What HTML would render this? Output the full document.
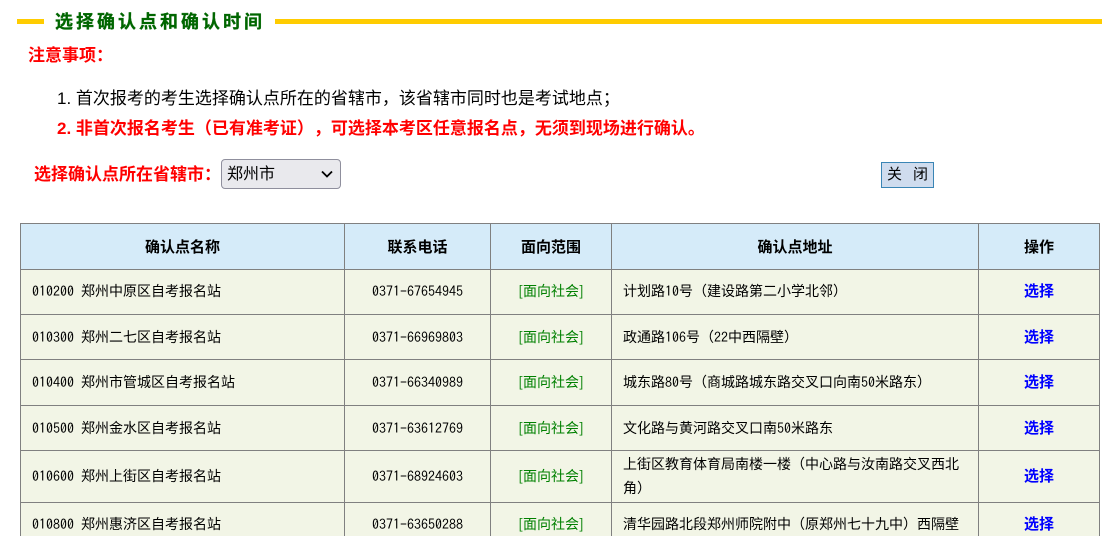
<!DOCTYPE html>
<html lang="zh">
<head>
<meta charset="utf-8">
<title>选择确认点和确认时间</title>
<style>
html,body{margin:0;padding:0;background:#fff;width:1111px;height:536px;overflow:hidden;}
body{position:relative;font-family:"Liberation Sans","WenQuanYi Zen Hei","Noto Sans CJK SC",sans-serif;color:#000;text-spacing-trim:space-all;}
.abs{position:absolute;white-space:nowrap;}
.bar{position:absolute;background:#ffcc00;height:5px;top:19px;}
.title{left:55px;top:9px;font-size:18px;line-height:26px;font-weight:bold;color:#006600;letter-spacing:3px;-webkit-text-stroke:.3px #006600;}
.red{color:#f00;font-weight:bold;}
.sel{position:absolute;left:221px;top:159px;width:120px;height:30px;box-sizing:border-box;border:1px solid #8f8f9d;border-radius:4px;background:#e9e9ed;font-size:16px;line-height:28px;padding:1px 0 0 5px;color:#000;}
.sel svg{position:absolute;right:6px;top:9px;}
.btn{position:absolute;left:881px;top:162px;width:53px;height:26px;box-sizing:border-box;border:1px solid #3a85b5;background:#cfdcee;font-size:15px;line-height:24px;text-align:center;color:#000;white-space:nowrap;}
.btn span{margin-left:11px;}
table{position:absolute;left:20px;top:223px;border-collapse:separate;border-spacing:0;table-layout:fixed;width:1080px;border-right:1px solid #808080;font-family:"WenQuanYi Zen Hei","Noto Sans CJK SC",sans-serif;font-size:14px;line-height:24px;}
th,td{border-left:1px solid #808080;border-top:1px solid #808080;padding:0 11px;box-sizing:border-box;text-align:center;font-size:14px;}
th{background:#d5ebf9;font-weight:bold;font-size:15px;}
td{background:#f2f5e6;}
td.l{text-align:left;}
td.g{color:#008000;}
td a{color:#00f;font-weight:bold;font-size:15px;text-decoration:none;}
i{font-style:normal;font-family:"IPAGothic",monospace;}
tr.u td{padding-bottom:2px;}
</style>
</head>
<body>
<div class="bar" style="left:17px;width:27px;"></div>
<div class="abs title">选择确认点和确认时间</div>
<div class="bar" style="left:275px;width:827px;"></div>
<div class="abs red" style="left:28px;top:44px;font-size:17px;line-height:24px;">注意事项：</div>
<div class="abs" style="left:57px;top:87px;font-size:17px;line-height:24px;">1. 首次报考的考生选择确认点所在的省辖市，该省辖市同时也是考试地点；</div>
<div class="abs red" style="left:57px;top:117px;font-size:17px;line-height:24px;">2. 非首次报名考生（已有准考证），可选择本考区任意报名点，无须到现场进行确认。</div>
<div class="abs red" style="left:34px;top:163px;font-size:17px;line-height:24px;">选择确认点所在省辖市：</div>
<div class="sel">郑州市<svg width="14" height="10" viewBox="0 0 14 10"><path d="M2 2.5 L7 7.5 L12 2.5" fill="none" stroke="#000" stroke-width="1.8"/></svg></div>
<div class="btn">关<span>闭</span></div>
<table>
<colgroup><col style="width:324px"><col style="width:146px"><col style="width:121px"><col style="width:367px"><col style="width:121px"></colgroup>
<tr style="height:46px"><th>确认点名称</th><th>联系电话</th><th>面向范围</th><th>确认点地址</th><th>操作</th></tr>
<tr class="u" style="height:45px"><td class="l"><i>010200 </i>郑州中原区自考报名站</td><td><i>0371-67654945</i></td><td class="g">[面向社会]</td><td class="l">计划路<i>10</i>号（建设路第二小学北邻）</td><td><a>选择</a></td></tr>
<tr style="height:45px"><td class="l"><i>010300 </i>郑州二七区自考报名站</td><td><i>0371-66969803</i></td><td class="g">[面向社会]</td><td class="l">政通路<i>106</i>号（<i>22</i>中西隔壁）</td><td><a>选择</a></td></tr>
<tr class="u" style="height:46px"><td class="l"><i>010400 </i>郑州市管城区自考报名站</td><td><i>0371-66340989</i></td><td class="g">[面向社会]</td><td class="l">城东路<i>80</i>号（商城路城东路交叉口向南<i>50</i>米路东）</td><td><a>选择</a></td></tr>
<tr style="height:45px"><td class="l"><i>010500 </i>郑州金水区自考报名站</td><td><i>0371-63612769</i></td><td class="g">[面向社会]</td><td class="l">文化路与黄河路交叉口南<i>50</i>米路东</td><td><a>选择</a></td></tr>
<tr class="u" style="height:52px"><td class="l"><i>010600 </i>郑州上街区自考报名站</td><td><i>0371-68924603</i></td><td class="g">[面向社会]</td><td class="l">上街区教育体育局南楼一楼（中心路与汝南路交叉西北角）</td><td><a>选择</a></td></tr>
<tr class="u" style="height:45px"><td class="l"><i>010800 </i>郑州惠济区自考报名站</td><td><i>0371-63650288</i></td><td class="g">[面向社会]</td><td class="l">清华园路北段郑州师院附中（原郑州七十九中）西隔壁</td><td><a>选择</a></td></tr>
</table>
</body>
</html>
